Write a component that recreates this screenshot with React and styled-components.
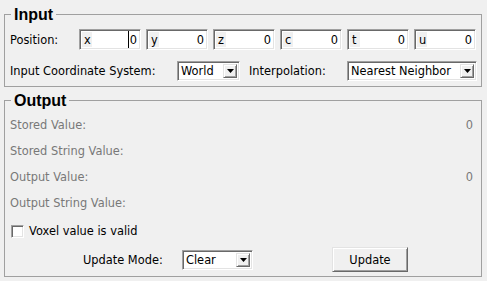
import React from 'react';
import styled, { createGlobalStyle } from 'styled-components';

const Global = createGlobalStyle`
  html, body { margin: 0; padding: 0; background: #f0f0f0; }
  body { font-family: "DejaVu Sans", "Liberation Sans", sans-serif; font-size: 11.4px; color: #000; }
  * { box-sizing: border-box; }
`;

const Window = styled.div`
  width: 487px;
  height: 281px;
  padding: 5px 5px 0 4px;
  display: flex;
  flex-direction: column;
  gap: 4px;
  overflow: hidden;
`;

const Group = styled.fieldset`
  margin: 0;
  min-width: 0;
  border: 1px solid #a0a0a0;
  padding: ${p => p.$pad};
`;

const Legend = styled.legend`
  margin-left: 1px;
  padding: 0 3px;
  font-family: "Liberation Sans", Arial, sans-serif;
  font-weight: bold;
  font-size: 16px;
  line-height: 19px;
`;

const Body = styled.div`
  display: flex;
  flex-direction: column;
  gap: ${p => p.$gap}px;
`;

const Row = styled.div`
  display: flex;
  align-items: center;
  height: ${p => p.$h}px;
  margin-top: ${p => p.$mt || 0}px;
  padding-left: ${p => p.$pl || 0}px;
`;

const Label = styled.span`
  flex: 0 0 ${p => p.$w}px;
  white-space: nowrap;
  color: ${p => (p.$disabled ? '#787878' : '#000')};
`;

const InfoRow = styled.div`
  display: flex;
  align-items: center;
  justify-content: space-between;
  height: 20px;
  padding-right: 4px;
  color: #787878;
  white-space: nowrap;
`;

const SpinGroup = styled.div`
  display: flex;
  gap: 5px;
`;

const Sunken = `
  border-top: 1px solid #a0a0a0;
  border-left: 1px solid #a0a0a0;
  border-bottom: 1px solid #ffffff;
  border-right: 1px solid #ffffff;
  box-shadow: inset 1px 1px 0 #696969, inset -1px -1px 0 #e3e3e3;
`;

const Spin = styled.div`
  ${Sunken}
  width: 62px;
  height: 21px;
  display: flex;
  align-items: stretch;
  background: #fff;
  padding: 2px;
`;

const Prefix = styled.span`
  flex: 0 0 10px;
  background: #f0f0f0;
  padding-left: 2px;
  display: flex;
  align-items: center;
  white-space: nowrap;
  overflow: visible;
`;

const SpinValue = styled.span`
  flex: 1;
  display: flex;
  align-items: center;
  justify-content: flex-end;
  padding-right: 1px;
`;

const Caret = styled.span`
  display: inline-block;
  width: 1px;
  height: 17px;
  background: #000;
  margin-right: 1px;
`;

const Combo = styled.div`
  ${Sunken}
  width: ${p => (p.$w ? `${p.$w}px` : 'auto')};
  flex: ${p => (p.$w ? `0 0 ${p.$w}px` : '1')};
  height: 20px;
  background: #fff;
  display: flex;
  align-items: stretch;
  padding: 2px;
`;

const ComboText = styled.span`
  flex: 1;
  padding-left: 1px;
  display: flex;
  align-items: center;
  white-space: nowrap;
  overflow: hidden;
`;

const Raised = `
  background: #f0f0f0;
  border-top: 1px solid #e3e3e3;
  border-left: 1px solid #e3e3e3;
  border-bottom: 1px solid #696969;
  border-right: 1px solid #696969;
  box-shadow: inset 1px 1px 0 #ffffff, inset -1px -1px 0 #a0a0a0;
`;

const ArrowBtn = styled.span`
  ${Raised}
  flex: 0 0 14px;
  display: flex;
  align-items: center;
  justify-content: center;
`;

const Check = styled.span`
  ${Sunken}
  display: inline-block;
  width: 13px;
  height: 13px;
  background: #fff;
  margin: 0 5px 0 1px;
`;

const Button = styled.button`
  ${Raised}
  width: 76px;
  height: 25px;
  padding: 0;
  font: inherit;
  color: #000;
  margin-left: ${p => p.$ml}px;
`;

const Arrow = () => (
  <svg width="7" height="4" viewBox="0 0 7 4">
    <path d="M0 0h7L3.5 4z" fill="#000" />
  </svg>
);

const ComboBox = ({ w, text }) => (
  <Combo $w={w}>
    <ComboText>{text}</ComboText>
    <ArrowBtn><Arrow /></ArrowBtn>
  </Combo>
);

const SpinBox = ({ prefix, caret }) => (
  <Spin>
    <Prefix>{prefix}</Prefix>
    <SpinValue>{caret && <Caret />}0</SpinValue>
  </Spin>
);

export default function App() {
  return (
    <>
      <Global />
      <Window>
        <Group $pad="5px 4px 5px 5px">
          <Legend>Input</Legend>
          <Body $gap={10}>
            <Row $h={21}>
              <Label $w={69}>Position:</Label>
              <SpinGroup>
                <SpinBox prefix="x" caret />
                <SpinBox prefix="y" />
                <SpinBox prefix="z" />
                <SpinBox prefix="c" />
                <SpinBox prefix="t" />
                <SpinBox prefix="u" />
              </SpinGroup>
            </Row>
            <Row $h={21}>
              <Label $w={167}>Input Coordinate System:</Label>
              <ComboBox w={63} text="World" />
              <Label $w={107} style={{ paddingLeft: 9 }}>Interpolation:</Label>
              <ComboBox text="Nearest Neighbor" />
            </Row>
          </Body>
        </Group>
        <Group $pad="5px 4px 4px 5px">
          <Legend>Output</Legend>
          <Body $gap={6}>
            <InfoRow><span>Stored Value:</span><span>0</span></InfoRow>
            <InfoRow><span>Stored String Value:</span><span></span></InfoRow>
            <InfoRow><span>Output Value:</span><span>0</span></InfoRow>
            <InfoRow><span>Output String Value:</span><span></span></InfoRow>
            <Row $h={20} $mt={2}>
              <Check />
              <span>Voxel value is valid</span>
            </Row>
            <Row $h={25} $pl={73}>
              <Label $w={99}>Update Mode:</Label>
              <ComboBox w={71} text="Clear" />
              <Button $ml={79}>Update</Button>
            </Row>
          </Body>
        </Group>
      </Window>
    </>
  );
}
